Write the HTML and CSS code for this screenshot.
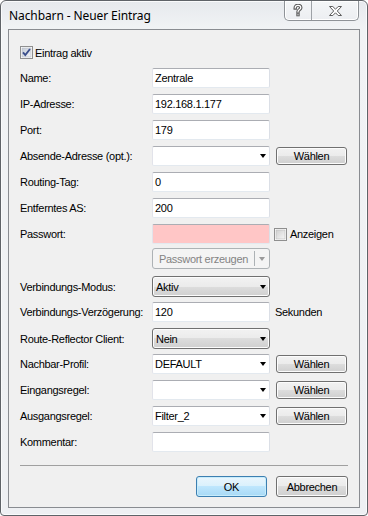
FILE: index.html
```html
<!DOCTYPE html>
<html lang="de">
<head>
<meta charset="utf-8">
<title>Nachbarn - Neuer Eintrag</title>
<link rel="stylesheet" href="styles.css">
</head>
<body>
<div class="window">
  <div class="titlebar">
    <span class="title">Nachbarn - Neuer Eintrag</span>
    <div class="caption">
      <span class="cbtn help">
        <svg width="10" height="13" viewBox="0 0 10 13"><path d="M2.2 4C2.2 2.2 3.4 1.4 5 1.4S7.8 2.3 7.8 3.7C7.8 5.6 5 5.6 5 7.8" fill="none" stroke="#5d5d5d" stroke-width="3.4" stroke-linecap="square"/><rect x="3.3" y="9.3" width="3.4" height="3" fill="#5d5d5d"/><path d="M2.2 4C2.2 2.2 3.4 1.4 5 1.4S7.8 2.3 7.8 3.7C7.8 5.6 5 5.6 5 7.8" fill="none" stroke="#fff" stroke-width="1.2" stroke-linecap="square"/><rect x="4.4" y="10.3" width="1.2" height="1" fill="#fff"/></svg>
      </span>
      <span class="cbtn close">
        <svg width="13" height="10" viewBox="0 0 13 10"><path d="M0.5 0.5H3.8L6.5 3.2L9.2 0.5H12.5L8.3 5L12.5 9.5H9.2L6.5 6.8L3.8 9.5H0.5L4.7 5Z" fill="#fff" stroke="#5d5d5d" stroke-width="1" stroke-linejoin="round"/></svg>
      </span>
    </div>
  </div>
  <div class="client">
    <div class="check-row">
      <span class="cb">
        <svg width="13" height="13" viewBox="0 0 13 13"><defs><linearGradient id="gc" x1="0" y1="0" x2="1" y2="1"><stop offset="0" stop-color="#c4cbd6"/><stop offset="1" stop-color="#f3f5f8"/></linearGradient></defs><rect x="0.5" y="0.5" width="12" height="12" fill="#fff" stroke="#8f8f8f"/><rect x="2" y="2" width="9" height="9" fill="url(#gc)" stroke="#b4bac4" stroke-width="0.6"/><path d="M3 6.3L5.3 9L10 3" fill="none" stroke="#3b4f8c" stroke-width="1.9"/></svg>
      </span>
      <span>Eintrag aktiv</span>
    </div>

    <div class="form">
      <div class="row"><span class="lbl">Name:</span><span class="field">Zentrale</span></div>
      <div class="row"><span class="lbl">IP-Adresse:</span><span class="field">192.168.1.177</span></div>
      <div class="row"><span class="lbl">Port:</span><span class="field">179</span></div>
      <div class="row"><span class="lbl">Absende-Adresse (opt.):</span><span class="field combo"><span class="val"></span><span class="arrow"></span></span><button class="btn pick">Wählen</button></div>
      <div class="row"><span class="lbl">Routing-Tag:</span><span class="field">0</span></div>
      <div class="row"><span class="lbl">Entferntes AS:</span><span class="field">200</span></div>
      <div class="row"><span class="lbl">Passwort:</span><span class="field pw"></span>
        <span class="show">
          <span class="cb">
            <svg width="13" height="13" viewBox="0 0 13 13"><defs><linearGradient id="gu" x1="0" y1="0" x2="1" y2="1"><stop offset="0" stop-color="#cfcfcf"/><stop offset="1" stop-color="#f6f6f6"/></linearGradient></defs><rect x="0.5" y="0.5" width="12" height="12" fill="#fff" stroke="#8f8f8f"/><rect x="2" y="2" width="9" height="9" fill="url(#gu)" stroke="#b8b8b8" stroke-width="0.6"/></svg>
          </span>
          <span>Anzeigen</span>
        </span>
      </div>
      <div class="row row-sub"><span class="lbl"></span><span class="split"><span class="split-main">Passwort erzeugen</span><span class="split-arrow"><span class="arrow grey"></span></span></span></div>
      <div class="row"><span class="lbl">Verbindungs-Modus:</span><span class="select"><span class="val">Aktiv</span><span class="arrow"></span></span></div>
      <div class="row"><span class="lbl">Verbindungs-Verzögerung:</span><span class="field">120</span><span class="unit">Sekunden</span></div>
      <div class="row"><span class="lbl">Route-Reflector Client:</span><span class="select"><span class="val">Nein</span><span class="arrow"></span></span></div>
      <div class="row"><span class="lbl">Nachbar-Profil:</span><span class="field combo"><span class="val">DEFAULT</span><span class="arrow"></span></span><button class="btn pick">Wählen</button></div>
      <div class="row"><span class="lbl">Eingangsregel:</span><span class="field combo"><span class="val"></span><span class="arrow"></span></span><button class="btn pick">Wählen</button></div>
      <div class="row"><span class="lbl">Ausgangsregel:</span><span class="field combo"><span class="val">Filter_2</span><span class="arrow"></span></span><button class="btn pick">Wählen</button></div>
      <div class="row"><span class="lbl">Kommentar:</span><span class="field"></span></div>
    </div>

    <div class="sep"></div>

    <div class="actions">
      <button class="btn default">OK</button>
      <button class="btn">Abbrechen</button>
    </div>
  </div>
</div>
</body>
</html>
```

FILE: styles.css
```css
* { box-sizing: border-box; }

body {
  margin: 0;
  background: #ffffff;
  font-family: "Liberation Sans", Arial, sans-serif;
  font-size: 11px;
  letter-spacing: -0.3px;
  color: #000;
}

.window {
  width: 368px;
  height: 516px;
  border: 1px solid #5f6368;
  border-radius: 6px 6px 4px 4px;
  background: linear-gradient(#e6e9ed 0px, #f1f3f5 28px, #eef0f3 100%);
  padding: 0 7px 7px 7px;
  display: flex;
  flex-direction: column;
  box-shadow: inset 0 0 0 1px #fafbfc;
}

.titlebar {
  height: 28px;
  display: flex;
  align-items: flex-start;
  justify-content: space-between;
}

.title {
  font-family: "Noto Sans", "Open Sans", sans-serif;
  font-size: 12px;
  letter-spacing: -0.1px;
  margin-left: 1px;
  margin-top: 6px;
  color: #000;
}

.caption {
  display: flex;
  height: 20px;
  margin-right: 1px;
  border: 1px solid #8e9297;
  border-top: none;
  border-radius: 0 0 5px 5px;
  background: linear-gradient(#f4f6f8, #eceef1);
  box-shadow: inset 0 0 0 1px #ffffff;
  overflow: hidden;
}

.cbtn {
  display: flex;
  align-items: center;
  justify-content: center;
}
.cbtn.help { width: 27px; border-right: 1px solid #9ea2a7; padding-bottom: 1px; }
.cbtn.close { width: 46px; padding-top: 1px; }

.client {
  flex: 1;
  border: 1px solid #898c91;
  background: #f0f0f0;
  padding: 16px 11px 0 11px;
  display: flex;
  flex-direction: column;
}

.check-row {
  display: flex;
  align-items: center;
  gap: 2px;
  height: 13px;
  margin-bottom: 9px;
}

.cb { display: block; width: 13px; height: 13px; }
.cb svg { display: block; }

.form {
  display: flex;
  flex-direction: column;
  gap: 6px;
}

.row {
  display: grid;
  grid-template-columns: 132px 118px auto;
  align-items: center;
  height: 20px;
}
.row-sub { margin-top: -2px; margin-bottom: 2px; }

.lbl { white-space: nowrap; }

.field {
  height: 20px;
  border: 1px solid;
  border-color: #abadb3 #dbdfe6 #e3e9ef #e2e3ea;
  border-radius: 2px;
  background: #fff;
  padding: 0 2px;
  display: flex;
  align-items: center;
  white-space: nowrap;
}
.field.pw { background: #ffc6c6; }

.combo { justify-content: space-between; padding-right: 3px; }

.arrow {
  width: 0;
  height: 0;
  border-left: 3.5px solid transparent;
  border-right: 3.5px solid transparent;
  border-top: 4px solid #000;
}
.arrow.grey { border-top-color: #9a9a9a; }

.select {
  height: 21px;
  border: 1px solid #707070;
  border-radius: 3px;
  background: linear-gradient(#f2f2f2 0%, #ebebeb 50%, #dddddd 50%, #cfcfcf 100%);
  box-shadow: inset 0 0 0 1px #fcfcfc;
  display: flex;
  align-items: center;
  justify-content: space-between;
  padding: 0 3px 0 3px;
}

.btn {
  font: inherit;
  letter-spacing: inherit;
  color: #000;
  height: 18px;
  border: 1px solid #707070;
  border-radius: 3px;
  background: linear-gradient(#f2f2f2 0%, #ebebeb 50%, #dddddd 50%, #cfcfcf 100%);
  box-shadow: inset 0 0 0 1px #fcfcfc;
  padding: 0;
  display: flex;
  align-items: center;
  justify-content: center;
}

.pick { width: 71px; margin-left: 6px; }

.show {
  display: flex;
  align-items: center;
  gap: 3px;
  margin-left: 4px;
}

.unit { margin-left: 5px; }

.split {
  height: 21px;
  border: 1px solid #adb2b5;
  border-radius: 3px;
  background: #f4f4f4;
  color: #838383;
  display: flex;
  align-items: stretch;
}
.split-main {
  flex: 1;
  display: flex;
  align-items: center;
  padding-left: 6px;
}
.split-arrow {
  width: 15px;
  border-left: 1px solid #adb2b5;
  margin: 2px 0;
  display: flex;
  align-items: center;
  justify-content: center;
}

.sep {
  margin-top: 13px;
  height: 1px;
  background: #a0a0a0;
}

.actions {
  margin-top: 10px;
  display: flex;
  justify-content: flex-end;
  gap: 9px;
}
.actions .btn { height: 21px; width: 72px; }
.actions .btn.default {
  width: 71px;
  border-color: #3c7fb1;
  background: linear-gradient(#eaf6fd 0%, #d9f0fc 50%, #bee6fd 50%, #a7d9f5 100%);
  box-shadow: inset 0 0 0 1px #c8ecfb;
}
```
